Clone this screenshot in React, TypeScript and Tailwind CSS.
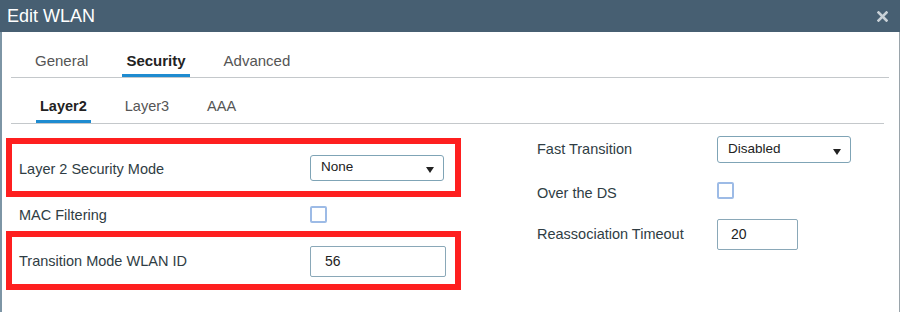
import React from 'react';

const font = { fontFamily: '"Liberation Sans", Arial, sans-serif' };

const Caret = () => (
  <svg width="8" height="6" viewBox="0 0 8 6" className="absolute right-[9px] top-1/2 -translate-y-[1px]">
    <path d="M0 0 L8 0 L4 6 Z" fill="#222" />
  </svg>
);

const Select: React.FC<{ value: string; className: string }> = ({ value, className }) => (
  <div
    className={`relative flex items-center border border-[#7fa4b6] rounded-[3px] bg-white pl-[10px] text-[13.5px] text-[#222] ${className}`}
  >
    {value}
    <Caret />
  </div>
);

const Checkbox: React.FC = () => (
  <div className="w-[17px] h-[17px] border-2 border-[#9dbbe6] rounded-[2px] bg-white" />
);

const TextInput: React.FC<{ value: string; className: string }> = ({ value, className }) => (
  <div className={`flex items-center border border-[#8aa8b8] rounded-[2px] bg-white text-[14px] text-[#222] ${className}`}>
    {value}
  </div>
);

export default function App() {
  return (
    <div className="w-[900px] h-[312px] bg-white overflow-hidden" style={font}>
      {/* Title bar */}
      <div className="h-[32px] bg-[#475f72] flex items-center justify-between pl-[7px] pr-[12px]">
        <span className="text-white text-[18px] leading-none">Edit WLAN</span>
        <svg width="11" height="11" viewBox="0 0 11 11">
          <path d="M1.5 1.5 L9.5 9.5 M9.5 1.5 L1.5 9.5" stroke="#c9d1d7" strokeWidth="2.6" strokeLinecap="square" />
        </svg>
      </div>

      <div className="h-[280px] border-l-2 border-l-[#7d95a5] border-r border-r-[#9aa4ab]">
        {/* Main tabs */}
        <div className="mx-[9px] w-[878px] border-b border-[#c4c8cb] h-[46px] flex items-end pl-[20px] gap-[30px] text-[15px]">
          <div className="px-[4px] pb-[2px] border-b-[3px] border-transparent text-[#555]">General</div>
          <div className="px-[4px] pb-[2px] border-b-[3px] border-[#1e8bd0] text-[#222] font-semibold">Security</div>
          <div className="px-[4px] pb-[2px] border-b-[3px] border-transparent text-[#555]">Advanced</div>
        </div>

        {/* Sub tabs */}
        <div className="mx-[9px] w-[873px] border-b border-[#c4c8cb] h-[46px] flex items-end pl-[25px] gap-[30px] text-[14.5px]">
          <div className="px-[4px] pb-[2px] border-b-[3px] border-[#1e8bd0] text-[#222] font-semibold">Layer2</div>
          <div className="px-[4px] pb-[2px] border-b-[3px] border-transparent text-[#555]">Layer3</div>
          <div className="px-[4px] pb-[2px] border-b-[3px] border-transparent text-[#555]">AAA</div>
        </div>

        <div className="flex text-[14.5px] text-[#2f3d44]">
          {/* Left column */}
          <div className="ml-[4px] mt-[14px] w-[455px] flex flex-col">
            <div className="h-[59px] border-[6px] border-[#fe1f1f] flex items-center pl-[7px]">
              <span className="w-[291px] mt-[4px]">Layer 2 Security Mode</span>
              <Select value="None" className="w-[134px] h-[26px]" />
            </div>
            <div className="h-[34px] flex items-center pl-[13px]">
              <span className="w-[291px] mt-[4px]">MAC Filtering</span>
              <Checkbox />
            </div>
            <div className="h-[59px] border-[6px] border-[#fe1f1f] flex items-center pl-[7px]">
              <span className="w-[291px] mt-[3px]">Transition Mode WLAN ID</span>
              <TextInput value="56" className="w-[136px] h-[31px] pl-[14px] mt-[2px]" />
            </div>
          </div>

          {/* Right column */}
          <div className="ml-[76px] mt-[12px] flex flex-col">
            <div className="h-[27px] flex items-center">
              <span className="w-[180px] mt-[1px]">Fast Transition</span>
              <Select value="Disabled" className="w-[134px] h-[27px]" />
            </div>
            <div className="mt-[19px] h-[17px] flex items-center">
              <span className="w-[180px] mt-[6px]">Over the DS</span>
              <Checkbox />
            </div>
            <div className="mt-[20px] h-[31px] flex items-center">
              <span className="w-[180px] mt-[1px]">Reassociation Timeout</span>
              <TextInput value="20" className="w-[81px] h-[31px] pl-[13px]" />
            </div>
          </div>
        </div>
      </div>
    </div>
  );
}
